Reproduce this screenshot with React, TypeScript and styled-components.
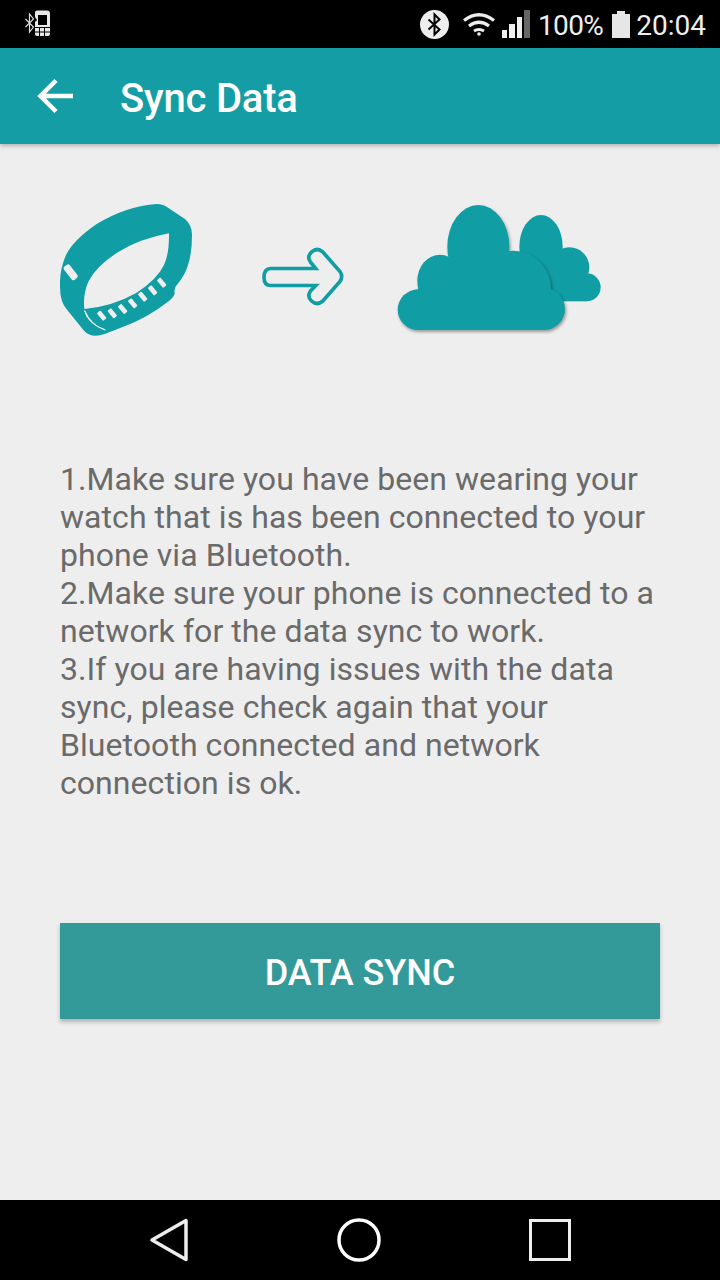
import React from "react";
import styled, {createGlobalStyle} from "styled-components";

const GlobalStyle = createGlobalStyle`
    html, body {
        margin: 0;
        padding: 0;
        background: #eeeeee;
    }
    * {
        box-sizing: border-box;
    }
`

const TEAL = '#119da4'

const steps = [
    '1.Make sure you have been wearing your watch that is has been connected to your phone via Bluetooth.',
    '2.Make sure your phone is connected to a network for the data sync to work.',
    '3.If you are having issues with the data sync, please check again that your Bluetooth connected and network connection is ok.',
]

const bandSlots = [
    [185, 377], [217, 370], [248, 357], [278, 340], [308, 320], [338, 301], [365, 278],
]

const StatusIcons = () => (
    <StatusBar>
        <svg width="28" height="28" viewBox="0 0 28 28" fill="none">
            <path d="M1.500 9l8 8-4 5V4l4 5-8 8" stroke="#ddd" strokeWidth="1.200"/>
            <path fillRule="evenodd" fill="#e8e8e8"
                  d="M11 2.500Q11 .5 13 .5h10q3 0 3 3V17H11v-5l2-2-2-3zM14 5v10h9V5zM11 18h15v6q0 2-2 2H13q-2 0-2-2z"/>
            <path d="M15.500 18v8M20.500 18v8M11 22h15" stroke="#000" strokeWidth="1"/>
        </svg>
        <StatusRight>
            <svg width="29" height="29" viewBox="0 0 29 29">
                <circle cx="14.500" cy="14.500" r="14.500" fill="#eee"/>
                <path d="M8.500 9.500l11 10-5 5V4.500l5 5-11 10" fill="none" stroke="#000" strokeWidth="2"/>
            </svg>
            <WifiIcon width="34" height="24" viewBox="0 0 34 24" fill="none" stroke="#eee" strokeWidth="3.200">
                <path d="M2 8.500Q17-3 32 8.500"/>
                <path d="M7 14q10-7.500 20 0"/>
                <path d="M12 19q5-3 10 0"/>
                <circle cx="17" cy="22" r="1.800" fill="#eee" stroke="none"/>
            </WifiIcon>
            <SignalIcon>
                <SignalBar $height={8} $on/>
                <SignalBar $height={14} $on/>
                <SignalBar $height={21} $on/>
                <SignalBar $height={28}/>
            </SignalIcon>
            <Percent>100%</Percent>
            <Battery/>
            <StatusText>20:04</StatusText>
        </StatusRight>
    </StatusBar>
)

const App = () => {
    return (
        <Page>
            <GlobalStyle/>
            <StatusIcons/>
            <AppBar>
                <svg width="38" height="36" viewBox="0 0 38 36" fill="none" stroke="#fff" strokeWidth="4.500">
                    <path d="M36 18H4M19 2.500L3.500 18 19 33.500"/>
                </svg>
                <Title>Sync Data</Title>
            </AppBar>
            <Main>
                <Illustration>
                    <BandIcon viewBox="60 42 396 396">
                        <path fill={TEAL} fillRule="evenodd"
                              d="M350 42Q368 42 382 52L436 88Q456 106 456 135Q456 190 444 225Q436 255 408 288Q402 296 404 310Q402 322 388 332Q320 385 250 410Q205 428 180 436Q150 442 132 422L80 358Q60 335 60 290Q58 240 78 195Q100 150 170 102Q260 48 350 42ZM387 130Q300 146 235 186Q170 226 145 275Q128 315 133 357Q220 348 290 308Q350 270 372 225Q388 190 387 130Z"/>
                        <path fill="#eeeeee" d="M134 362Q142 400 196 420Q155 408 134 362Z" stroke="#eeeeee" strokeWidth="3"/>
                        <rect x="81" y="222" width="22" height="50" rx="7" fill="#eeeeee" transform="rotate(-38 92 247)"/>
                        {bandSlots.map(([x, y]) => (
                            <rect key={x} x={x - 7} y={y - 15} width="14" height="30" rx="3" fill="#eeeeee"
                                  transform={`rotate(-40 ${x} ${y})`}/>
                        ))}
                    </BandIcon>
                    <ArrowIcon viewBox="36 172 246 176" fill="none" stroke={TEAL} strokeWidth="11">
                        <path d="M62 236H197L181 216Q170 200 185 186Q202 172 218 186L270 245Q280 260 270 275L218 334Q202 348 185 334Q170 320 181 304L197 287H62Q42 287 42 262Q42 236 62 236Z"/>
                    </ArrowIcon>
                    <CloudIcon viewBox="442 45 610 375">
                        <g fill={TEAL}>
                            <ellipse cx="873" cy="170" rx="65" ry="95"/>
                            <circle cx="958" cy="232" r="60"/>
                            <circle cx="1010" cy="292" r="42"/>
                            <rect x="800" y="230" width="210" height="104"/>
                        </g>
                        <FrontCloud fill={TEAL}>
                            <ellipse cx="685" cy="170" rx="93" ry="125"/>
                            <ellipse cx="570" cy="272" rx="68" ry="78"/>
                            <circle cx="504" cy="359" r="61"/>
                            <circle cx="790" cy="295" r="113"/>
                            <circle cx="882" cy="357" r="63"/>
                            <rect x="504" y="260" width="378" height="160"/>
                        </FrontCloud>
                    </CloudIcon>
                </Illustration>
                <Steps>
                    {steps.map(step => <p key={step}>{step}</p>)}
                </Steps>
                <SyncButton>DATA SYNC</SyncButton>
            </Main>
            <NavBar>
                <BackTriangle width="40" height="46" viewBox="0 0 40 46" fill="none" stroke="#eee" strokeWidth="3.500" strokeLinejoin="round">
                    <path d="M3 23L37 3.500V42.500Z"/>
                </BackTriangle>
                <HomeCircle width="44" height="44" viewBox="0 0 44 44" fill="none" stroke="#fff" strokeWidth="3.500">
                    <circle cx="22" cy="22" r="20"/>
                </HomeCircle>
                <RecentButton/>
            </NavBar>
        </Page>
    )
}

export default App

const Page = styled.div`
    width: 720px;
    height: 1280px;
    display: flex;
    flex-direction: column;
    overflow: hidden;
    background: #eeeeee;
    font-family: Roboto, "Liberation Sans", sans-serif;
`

const StatusBar = styled.div`
    height: 48px;
    flex: none;
    background: #000;
    display: flex;
    align-items: center;
    justify-content: space-between;
    padding: 0 14px 0 24px;
`

const StatusRight = styled.div`
    display: flex;
    align-items: center;
`

const WifiIcon = styled.svg`
    margin-left: 13px;
`

const SignalIcon = styled.div`
    height: 28px;
    margin-left: 6px;
    display: flex;
    align-items: flex-end;
    gap: 2px;
`

const SignalBar = styled.span<{ $height: number, $on?: boolean }>`
    width: 5.500px;
    height: ${props => props.$height}px;
    background: ${props => props.$on ? '#eee' : '#666'};
`

const StatusText = styled.span`
    padding-top: 2px;
    font-size: 28px;
    color: #eee;
    margin-left: 6px;
`

const Percent = styled(StatusText)`
    margin-left: 8px;
    letter-spacing: -0.6px;
`

const Battery = styled.span`
    position: relative;
    width: 18px;
    height: 24px;
    margin: 3px 0 0 9px;
    background: #e6e6e6;

    &::before {
        content: '';
        position: absolute;
        top: -3px;
        left: 5px;
        width: 8px;
        height: 3px;
        background: #e6e6e6;
    }
`

const AppBar = styled.header`
    height: 96px;
    flex: none;
    position: relative;
    background: #159da5;
    box-shadow: 0 2px 4px rgba(0, 0, 0, .25);
    display: flex;
    align-items: center;
    padding: 0 0 0 37px;
`

const Title = styled.h1`
    margin: 4px 0 0 45px;
    font-size: 40px;
    font-weight: 500;
    letter-spacing: -0.2px;
    color: #fff;
`

const Main = styled.main`
    flex: 1;
    padding: 60px 60px 0;
`

const Illustration = styled.div`
    display: flex;
    align-items: flex-start;
`

const BandIcon = styled.svg`
    width: 132px;
    height: 132px;
    flex: none;
`

const ArrowIcon = styled.svg`
    width: 82px;
    height: 59px;
    flex: none;
    margin: 43px 0 0 70px;
`

const CloudIcon = styled.svg`
    width: 204px;
    height: 125px;
    flex: none;
    margin: 1px 0 0 53px;
    overflow: visible;
`

const FrontCloud = styled.g`
    filter: drop-shadow(4px 6px 5px rgba(0, 0, 0, .35));
`

const Steps = styled.div`
    margin-top: 124px;
    font-size: 32px;
    line-height: 38px;
    letter-spacing: 0.06px;
    color: #6a6a6a;

    p {
        margin: 0;
    }
`

const SyncButton = styled.button`
    display: block;
    width: 600px;
    height: 96px;
    margin-top: 121px;
    padding: 4px 0 0 0;
    border: none;
    background: #339999;
    box-shadow: 0 3px 4px rgba(0, 0, 0, .25);
    color: #fff;
    font-family: inherit;
    font-size: 36px;
    font-weight: 500;
`

const NavBar = styled.nav`
    height: 80px;
    flex: none;
    background: #000;
    display: flex;
    align-items: center;
    padding-left: 149px;
`

const BackTriangle = styled.svg`
    flex: none;
`

const HomeCircle = styled.svg`
    flex: none;
    margin-left: 148px;
`

const RecentButton = styled.span`
    width: 42px;
    height: 42px;
    margin-left: 148px;
    border: 3.500px solid #eee;
`
